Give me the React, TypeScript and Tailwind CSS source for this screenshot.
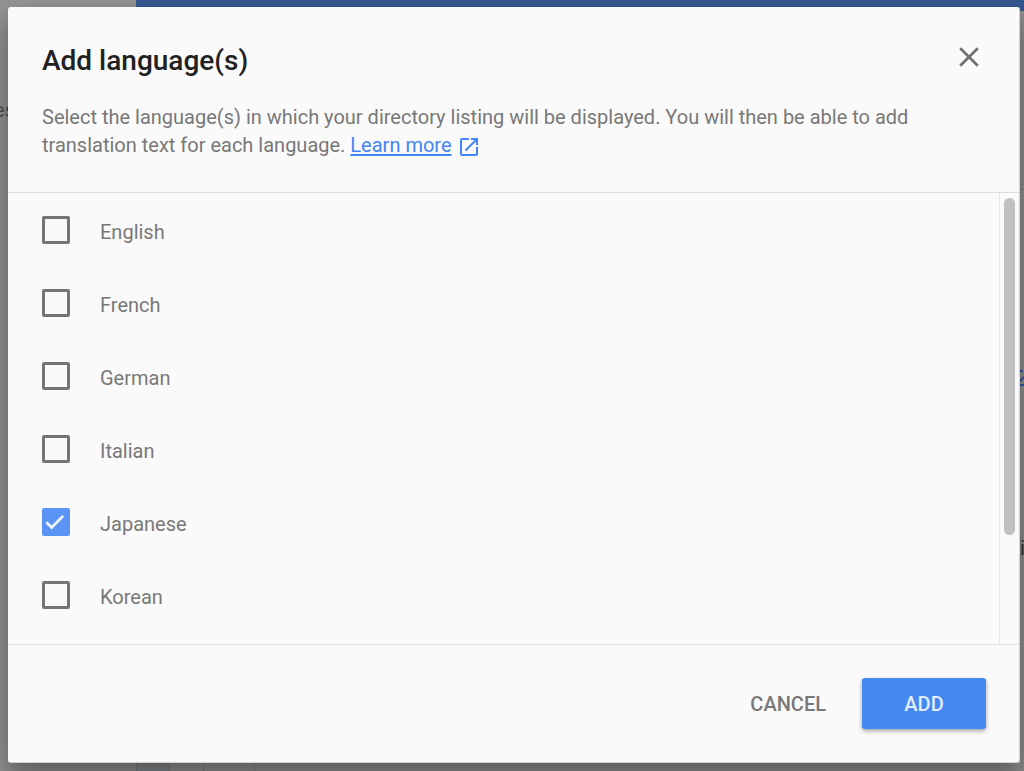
import { useState } from "react";

const languages = ["English", "French", "German", "Italian", "Japanese", "Korean"];

function CloseIcon() {
  return (
    <svg viewBox="0 0 20 20" className="size-5" aria-hidden="true">
      <path d="M1.2 1.2 L18.8 18.8 M18.8 1.2 L1.2 18.8" stroke="currentColor" strokeWidth="2.7" fill="none" />
    </svg>
  );
}

function OpenInNewIcon() {
  return (
    <svg viewBox="3 3 18 18" className="ml-2 inline size-[18px]" fill="currentColor" aria-hidden="true">
      <path d="M19 19H5V5h7V3H5a2 2 0 0 0-2 2v14a2 2 0 0 0 2 2h14c1.1 0 2-.9 2-2v-7h-2v7zM14 3v2h3.59l-9.83 9.83 1.41 1.41L19 6.41V10h2V3h-7z" />
    </svg>
  );
}

function BackgroundPage() {
  return (
    <div aria-hidden="true" className="absolute inset-0 flex overflow-hidden bg-[#8f8f8f] text-xl text-[#505050]">
      <div className="w-[136px] shrink-0 bg-[#939393]">
        <p className="-ml-1.5 mt-24 leading-7">es</p>
      </div>
      <div className="flex flex-1 flex-col">
        <div className="h-[11px] bg-[#35568f]" />
        <div className="flex flex-1 items-end">
          <div className="h-3 w-[34px] border-x border-[#7a7c7d] bg-[#868a8c]" />
          <div className="h-3 w-[34px] border-r border-[#7c7c7c] bg-[#929292]" />
          <div className="h-3 w-[51px] border-r border-[#828282] bg-[#929292]" />
          <div className="h-3 flex-1 bg-[#929292]" />
        </div>
      </div>
      <div className="absolute right-0 top-[11px] h-full w-1 overflow-hidden bg-[#8f8f8f]">
        <div className="mt-[178px] h-px bg-[#7a7a7a]" />
        <svg viewBox="0 0 4 16" className="mt-[180px] h-4 w-1" stroke="#34519a" strokeWidth="2" fill="none">
          <path d="M0 1 H3 M0 11 L4 7 M0 15 H4" />
        </svg>
        <p className="mt-[148px] text-[#333333]">i</p>
      </div>
    </div>
  );
}

function LanguageOption({ name, checked, onToggle }: { name: string; checked: boolean; onToggle: () => void }) {
  return (
    <li>
      <label className="flex h-[73px] cursor-pointer items-center gap-[30px] pl-[34px]">
        <span className="grid size-7">
          <input
            type="checkbox"
            checked={checked}
            onChange={onToggle}
            className="peer col-start-1 row-start-1 size-7 cursor-pointer appearance-none rounded-xs border-3 border-[#757575] checked:border-[#5a95f5] checked:bg-[#5a95f5]"
          />
          <svg
            viewBox="0 0 28 28"
            className="pointer-events-none invisible col-start-1 row-start-1 size-7 peer-checked:visible"
            aria-hidden="true"
          >
            <path d="M4.4 14.3 L9.6 19.5 L21.2 7.9" stroke="#f0f5fe" strokeWidth="2.7" fill="none" />
          </svg>
        </span>
        <span className="pt-1">{name}</span>
      </label>
    </li>
  );
}

export default function App() {
  const [selected, setSelected] = useState<string[]>(["Japanese"]);
  const toggle = (name: string) =>
    setSelected((now) => (now.includes(name) ? now.filter((item) => item !== name) : [...now, name]));

  return (
    <div className="relative flex min-h-screen flex-col pb-2 pl-2 pr-1 pt-[7px] font-[Roboto,sans-serif] text-xl text-[#787878]">
      <BackgroundPage />
      <section
        role="dialog"
        aria-labelledby="dialog-title"
        className="relative flex flex-1 flex-col rounded-[3px] border-r border-b border-[#d0d0d0] bg-[#fafafa] shadow-[0_14px_24px_2px_rgba(0,0,0,0.35)]"
      >
        <header className="px-[34px] pb-[33px] pt-9">
          <div className="flex items-start justify-between">
            <h1 id="dialog-title" className="text-[28px] font-medium leading-9 text-[#212121]">
              Add language(s)
            </h1>
            <button type="button" aria-label="Close" className="mr-1.5 mt-1 cursor-pointer text-[#707070]">
              <CloseIcon />
            </button>
          </div>
          <p className="mt-6 max-w-[880px] leading-7">
            Select the language(s) in which your directory listing will be displayed. You will then be able to add
            translation text for each language.{" "}
            <a href="#learn-more" className="text-[#4285f4]">
              <span className="underline underline-offset-2">Learn more</span>
              <OpenInNewIcon />
            </a>
          </p>
        </header>
        <div className="flex flex-1 border-y border-[#dedede]">
          <ul className="flex-1">
            {languages.map((name) => (
              <LanguageOption key={name} name={name} checked={selected.includes(name)} onToggle={() => toggle(name)} />
            ))}
          </ul>
          <div className="flex w-5 flex-col items-center border-l border-[#e8e8e8] py-[5px]">
            <div className="h-[337px] w-[11px] rounded-full bg-[#c1c1c1]" />
          </div>
        </div>
        <footer className="flex items-center justify-end gap-4 px-[33px] py-[33px] font-medium">
          <button type="button" className="h-[51px] cursor-pointer px-5">
            CANCEL
          </button>
          <button
            type="button"
            className="h-[51px] w-[124px] cursor-pointer rounded-[3px] bg-[#4688f1] text-[#e3edfd] shadow-[0_2px_4px_rgba(0,0,0,0.35)]"
          >
            ADD
          </button>
        </footer>
      </section>
    </div>
  );
}
